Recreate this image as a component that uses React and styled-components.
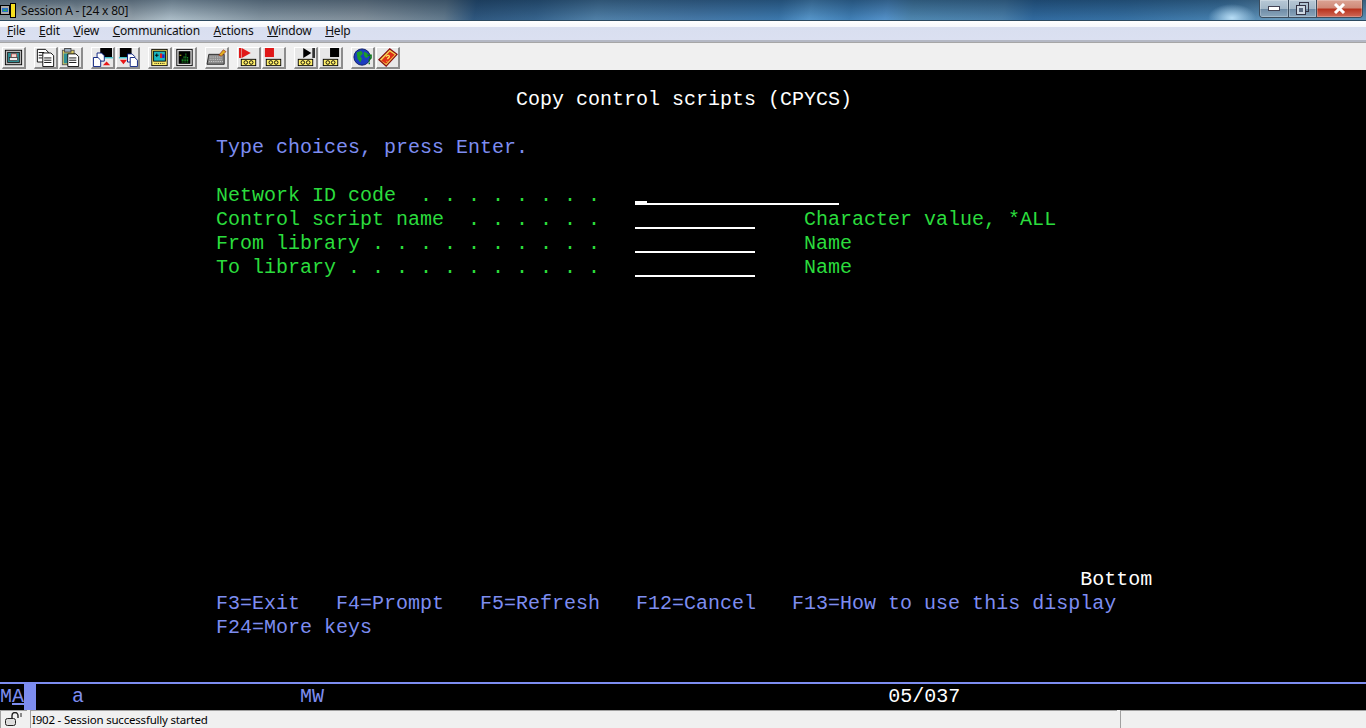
import React from 'react';
import styled, { createGlobalStyle } from 'styled-components';

const GREEN = '#2bdc3d';
const BLUE = '#7d8df0';

const menus = [
  ['F', 'ile'],
  ['E', 'dit'],
  ['V', 'iew'],
  ['C', 'ommunication'],
  ['A', 'ctions'],
  ['W', 'indow'],
  ['H', 'elp'],
];

// tape deck under the macro buttons
const Tape = () => (
  <>
    <rect x="3.5" y="12.5" width="16" height="7" fill="#ffef6a" stroke="#000" />
    <circle cx="8.5" cy="16" r="2" fill="#ffef6a" stroke="#000" />
    <circle cx="14.5" cy="16" r="2" fill="#ffef6a" stroke="#000" />
  </>
);

const Doc = ({ x, y, fill = '#fff', stroke = '#000', w = 8, h = 10 }) => (
  <path
    d={`M${x + 0.5} ${y + 0.5}h${w - 3}l3 3v${h - 3}h-${w}z`}
    fill={fill}
    stroke={stroke}
  />
);

const icons = {
  screen: (
    <>
      <rect x="2.5" y="2.5" width="18" height="16" fill="#b8b8b8" stroke="#000" />
      <rect x="5" y="5" width="13" height="11" fill="#2f8f96" stroke="#222" />
      <rect x="9" y="6.5" width="6" height="4" fill="#f4d6d0" stroke="#b02020" strokeWidth=".7" />
      <rect x="7" y="10.5" width="9" height="3.5" fill="#eee" stroke="#222" strokeWidth=".7" />
    </>
  ),
  copy: (
    <>
      <Doc x={2} y={1} w={12} h={14} />
      <Doc x={8} y={5} w={12} h={15} />
      <path d="M4 5h6M4 8h4M4 11h4M10 11h8M10 13.5h8M10 16h8" stroke="#000" />
    </>
  ),
  paste: (
    <>
      <rect x="2.5" y="2.5" width="13" height="16" fill="#d8c860" stroke="#555" />
      <rect x="5" y="0.5" width="7" height="4" fill="#9ab" stroke="#444" />
      <rect x="4" y="6" width="5" height="11" fill="#2f8f96" />
      <Doc x={8} y={6} w={12} h={14} />
      <path d="M10 11h8M10 13.5h8M10 16h8" stroke="#000" />
    </>
  ),
  send: (
    <>
      <rect x="9" y="0" width="13" height="10" fill="#000" />
      <rect x="8" y="10" width="15" height="1.5" fill="#3ac0c8" />
      <Doc x={5} y={5} w={8} h={9} stroke="#00187a" />
      <Doc x={1} y={10} w={8} h={10} stroke="#00187a" />
      <path d="M12 19l4-4 4 4z" fill="#e81818" />
    </>
  ),
  receive: (
    <>
      <rect x="3" y="0" width="13" height="10" fill="#000" />
      <rect x="2" y="10" width="15" height="1.5" fill="#3ac0c8" />
      <Doc x={11} y={6} w={8} h={9} stroke="#00187a" />
      <Doc x={14} y={10} w={8} h={10} stroke="#00187a" />
      <path d="M3 13h8l-4 5z" fill="#e81818" />
    </>
  ),
  monitor: (
    <>
      <rect x="3" y="1.5" width="17" height="18" fill="#ffef6a" stroke="#000" />
      <rect x="5" y="3.5" width="13" height="11" fill="#18b8c0" stroke="#000" />
      <path d="M6.5 8h4M8.5 6v4" stroke="#000" />
      <rect x="12" y="6" width="2.5" height="5" fill="#e02020" />
      <rect x="14.5" y="7" width="2.5" height="4" fill="#2020d0" />
      <path d="M6 17h11" stroke="#000" strokeDasharray="1 1" />
    </>
  ),
  graph: (
    <>
      <rect x="3" y="1.5" width="17" height="18" fill="#ddd" stroke="#000" />
      <rect x="5" y="3.5" width="13" height="14" fill="#000" />
      <path d="M9 16v-4M11 16v-7M13 16v-10M15 16v-6" stroke="#2bdc3d" strokeDasharray="1 .6" />
      <path d="M6 8h2" stroke="#e0d020" />
    </>
  ),
  keyboard: (
    <>
      <path d="M3 7h17v11H1z" fill="#8a8a8a" stroke="#222" />
      <path d="M4 10h14M4 12.5h14M3.5 15h15" stroke="#ddd" strokeDasharray="1 1" />
      <path d="M14 8l5-6 3 2-5 5z" fill="#e0b020" stroke="#8a2020" strokeWidth=".7" />
    </>
  ),
  record: (
    <>
      <rect x="1" y="0" width="2.5" height="11" fill="#e01818" />
      <path d="M4 0l10 5.5-10 5.5z" fill="#e01818" />
      <Tape />
    </>
  ),
  stop: (
    <>
      <rect x="2" y="0" width="10" height="10" fill="#e01818" />
      <Tape />
    </>
  ),
  play: (
    <>
      <path d="M9 0l9 5.5-9 5.5z" fill="#000" />
      <rect x="19" y="0" width="3" height="11" fill="#333" />
      <Tape />
    </>
  ),
  halt: (
    <>
      <rect x="11" y="0" width="10" height="10" fill="#000" />
      <Tape />
    </>
  ),
  globe: (
    <>
      <circle cx="11" cy="10" r="9" fill="#1c3cc0" stroke="#0a1a60" />
      <path d="M5 5l5-2 2 3-3 3 2 3-2 4-3-4zM13 4l4 2 1 4-3 1-2-3z" fill="#1c9c2c" />
      <path d="M17 8h4v3l-2 2v2M19 16v2" stroke="#0a7a1a" strokeWidth="1.6" fill="none" />
    </>
  ),
  help: (
    <>
      <path d="M2 13L14 1l8 6-12 13z" fill="#f8d850" stroke="#8a1010" strokeWidth="1.4" />
      <path d="M4.5 14l9.5-10 5.5 3.5-9.5 10z" fill="#e03018" />
      <path d="M10 9.5c1-2 4-1.5 3.5.5-.3 1-2 1-2 2.5M10.5 15l.5-.5" stroke="#ffe860" strokeWidth="1.4" fill="none" />
    </>
  ),
};

const groups = [
  ['screen'],
  ['copy', 'paste'],
  ['send', 'receive'],
  ['monitor', 'graph'],
  ['keyboard'],
  ['record', 'stop'],
  ['play', 'halt'],
  ['globe', 'help'],
];

const App = () => (
  <Page>
    <GlobalStyle />
    <TitleBar>
      <AppIcon viewBox="0 0 17 17">
        <rect x="0.5" y="3.5" width="9" height="9" fill="#aaa" stroke="#000" />
        <path d="M2 6h6v4H2z" fill="#2a70c8" />
        <path d="M3 9l2-2 2 2z" fill="#2bbc3d" />
        <rect x="10.5" y="1.5" width="5" height="14" fill="#f6e020" stroke="#000" />
      </AppIcon>
      <TitleText>Session A - [24 x 80]</TitleText>
      <WindowButtons>
        <WindowButton $width={28}>
          <svg width="12" height="6" viewBox="0 0 12 6">
            <rect x="0.5" y="0.5" width="11" height="4" fill="#fff" stroke="#445" />
          </svg>
        </WindowButton>
        <WindowButton $width={27}>
          <svg width="13" height="13" viewBox="0 0 13 13">
            <rect x="3.5" y="0.5" width="9" height="9" fill="none" stroke="#334" />
            <rect x="0.5" y="3.5" width="9" height="9" fill="#cdd8e2" stroke="#334" />
            <rect x="3" y="6" width="4" height="4" fill="#5a6a80" />
          </svg>
        </WindowButton>
        <CloseButton>
          <svg width="13" height="11" viewBox="0 0 13 11">
            <path d="M2 1l9 9M11 1l-9 9" stroke="#fff" strokeWidth="3" />
          </svg>
        </CloseButton>
      </WindowButtons>
    </TitleBar>

    <MenuBar>
      {menus.map(([key, rest]) => (
        <MenuItem key={key}>
          <u>{key}</u>
          {rest}
        </MenuItem>
      ))}
    </MenuBar>

    <Toolbar>
      {groups.map(group => (
        <ToolGroup key={group[0]}>
          {group.map(name => (
            <ToolButton key={name}>
              <svg width="21" height="19" viewBox="0 0 23 21">
                {icons[name]}
              </svg>
            </ToolButton>
          ))}
        </ToolGroup>
      ))}
    </Toolbar>

    <Terminal>
      <Screen>
        <Line $color="#fff">{'                         Copy control scripts (CPYCS)'}</Line>
        <Line $skip={1} $color={BLUE}>Type choices, press Enter.</Line>
        <Line $skip={1}>
          {'Network ID code  . . . . . . . .   '}
          <Field $size={17}>
            <Cursor />
          </Field>
        </Line>
        <Line>
          {'Control script name  . . . . . .   '}
          <Field $size={10} />
          {'    Character value, *ALL'}
        </Line>
        <Line>
          {'From library . . . . . . . . . .   '}
          <Field $size={10} />
          {'    Name'}
        </Line>
        <Line>
          {'To library . . . . . . . . . . .   '}
          <Field $size={10} />
          {'    Name'}
        </Line>
        <Line $skip={12} $color="#fff">
          {'                                                                        Bottom'}
        </Line>
        <Line $color={BLUE}>
          {'F3=Exit   F4=Prompt   F5=Refresh   F12=Cancel   F13=How to use this display'}
        </Line>
        <Line $color={BLUE}>F24=More keys</Line>
      </Screen>

      <OperatorLine>
        M<u>A</u>
        <OiaBlock />
        {'   a                  MW'}
        <OiaPosition>{'                                               05/037'}</OiaPosition>
      </OperatorLine>
    </Terminal>

    <StatusBar>
      <LockCell>
        <svg width="20" height="15" viewBox="0 0 20 15">
          <rect x="1.5" y="6.5" width="10" height="7" rx="2" fill="#ddd" stroke="#222" />
          <path d="M8 6V3.5a3 3 0 0 1 6 0V6" fill="none" stroke="#222" strokeWidth="1.4" />
          <path d="M17 1v4" stroke="#222" />
        </svg>
      </LockCell>
      <MessageCell>I902 - Session successfully started</MessageCell>
      <EmptyCell />
    </StatusBar>
  </Page>
);

const GlobalStyle = createGlobalStyle`
  html, body {
    margin: 0;
    padding: 0;
    height: 100%;
    overflow: hidden;
    background: #000;
  }
`;

const Page = styled.div`
  width: 1366px;
  height: 728px;
  display: flex;
  flex-direction: column;
  font-family: "Noto Sans", "Open Sans", sans-serif;
  font-size: 12px;
  letter-spacing: -0.2px;
  color: #000;
`;

const TitleBar = styled.div`
  height: 21px;
  flex: none;
  display: flex;
  align-items: flex-start;
  box-sizing: border-box;
  border-bottom: 1px solid #2c4a60;
  background:
    radial-gradient(ellipse 24px 14px at 1232px 18px, #b8def6 0%, rgba(160, 210, 240, 0) 100%),
    linear-gradient(180deg, rgba(20, 40, 60, 0.45) 0%, rgba(255, 255, 255, 0.06) 100%),
    linear-gradient(
      100deg,
      #8796a0 0,
      #8d9ba5 130px,
      #a9bbc6 170px,
      #7f919e 260px,
      #7b8a96 360px,
      #5b7488 440px,
      #234e78 470px,
      #2a5a86 530px,
      #4679a3 590px,
      #3a70a2 690px,
      #3070a8 770px,
      #4c90c8 800px,
      #3578b2 840px,
      #4a8cc8 875px,
      #4480ac 900px,
      #3f78a6 990px,
      #25629a 1020px,
      #2a689e 1110px,
      #3a78aa 1200px,
      #5f94ba 1260px,
      #4f88b0 1366px
    );
`;

const AppIcon = styled.svg`
  width: 17px;
  height: 17px;
  margin: 2px 4px 0 0;
  flex: none;
`;

const TitleText = styled.span`
  line-height: 21px;
  color: #0c0c0c;
  text-shadow: 0 0 6px rgba(255, 255, 255, 0.55);
`;

const WindowButtons = styled.div`
  width: 104px;
  margin: 0 3px 0 auto;
  display: flex;
  height: 18px;
  box-sizing: border-box;
  border: 1px solid #3c4c5c;
  border-top: none;
  border-radius: 0 0 4px 4px;
  overflow: hidden;
`;

const WindowButton = styled.div`
  width: ${props => props.$width}px;
  display: flex;
  align-items: center;
  justify-content: center;
  border-right: 1px solid #3c4c5c;
  box-shadow: inset 0 0 0 1px rgba(255, 255, 255, 0.25);
  background: linear-gradient(180deg, #b7c8d6 0%, #a4b8c8 50%, #6f8ca6 55%, #8ba6bc 100%);
`;

const CloseButton = styled(WindowButton)`
  flex: 1;
  border-right: none;
  background: linear-gradient(180deg, #dba393 0%, #d08a78 45%, #b8341f 55%, #cf6a58 100%);
`;

const MenuBar = styled.div`
  height: 21px;
  flex: none;
  box-sizing: border-box;
  padding-left: 7px;
  display: flex;
  align-items: center;
  gap: 13.7px;
  border-bottom: 2px solid #b4b8c4;
  background: linear-gradient(180deg, #ffffff 0%, #f6f8fc 30%, #d9dff0 34%, #dbe0f1 100%);
`;

const MenuItem = styled.span`
  color: #101010;
`;

const Toolbar = styled.div`
  height: 28px;
  flex: none;
  box-sizing: border-box;
  padding: 4px 0 0 2px;
  display: flex;
  gap: 8px;
  align-items: flex-start;
  background: #f0f0f0;
  border-top: 1px solid #a6a6a6;
`;

const ToolGroup = styled.div`
  display: flex;
  gap: 1px;
`;

const ToolButton = styled.div`
  width: 24px;
  height: 22px;
  box-sizing: border-box;
  display: flex;
  align-items: center;
  justify-content: center;
  background: #e8e8e8;
  border-top: 1px solid #fff;
  border-left: 1px solid #fff;
  border-right: 2px solid #8c8c8c;
  border-bottom: 2px solid #8c8c8c;
`;

const Terminal = styled.div`
  flex: 1;
  display: flex;
  flex-direction: column;
  background: #000;
  font-family: "Liberation Mono", "DejaVu Sans Mono", monospace;
  font-size: 20px;
  letter-spacing: 0;
  line-height: 24px;
  white-space: pre;
`;

const Screen = styled.div`
  padding: 18px 0 0 216px;
  flex: 1;
`;

const Line = styled.div`
  height: 24px;
  margin-top: ${props => (props.$skip || 0) * 24}px;
  color: ${props => props.$color || GREEN};
`;

const Field = styled.span`
  display: inline-block;
  position: relative;
  width: ${props => props.$size * 12}px;
  height: 21px;
  margin: 0 1px 0 -1px;
  vertical-align: top;
  box-sizing: border-box;
  border-bottom: 2px solid #fff;
`;

const Cursor = styled.span`
  position: absolute;
  left: 0;
  bottom: -2px;
  width: 12px;
  height: 4px;
  background: #fff;
`;

const OperatorLine = styled.div`
  height: 28px;
  box-sizing: border-box;
  border-top: 2px solid ${BLUE};
  line-height: 25px;
  color: ${BLUE};
  display: flex;
`;

const OiaBlock = styled.span`
  width: 12px;
  background: ${BLUE};
`;

const OiaPosition = styled.span`
  color: #fff;
`;

const StatusBar = styled.div`
  height: 18px;
  flex: none;
  display: flex;
  gap: 3px;
  background: #f0f0f0;
  font-size: 11.5px;
`;

const Cell = styled.div`
  box-sizing: border-box;
  border-top: 1px solid #a0a0a0;
  border-left: 1px solid #a0a0a0;
  line-height: 17px;
`;

const LockCell = styled(Cell)`
  width: 27px;
  padding: 1px 0 0 3px;
`;

const MessageCell = styled(Cell)`
  width: 1087px;
  padding-left: 1px;
`;

const EmptyCell = styled(Cell)`
  flex: 1;
`;

export default App;
